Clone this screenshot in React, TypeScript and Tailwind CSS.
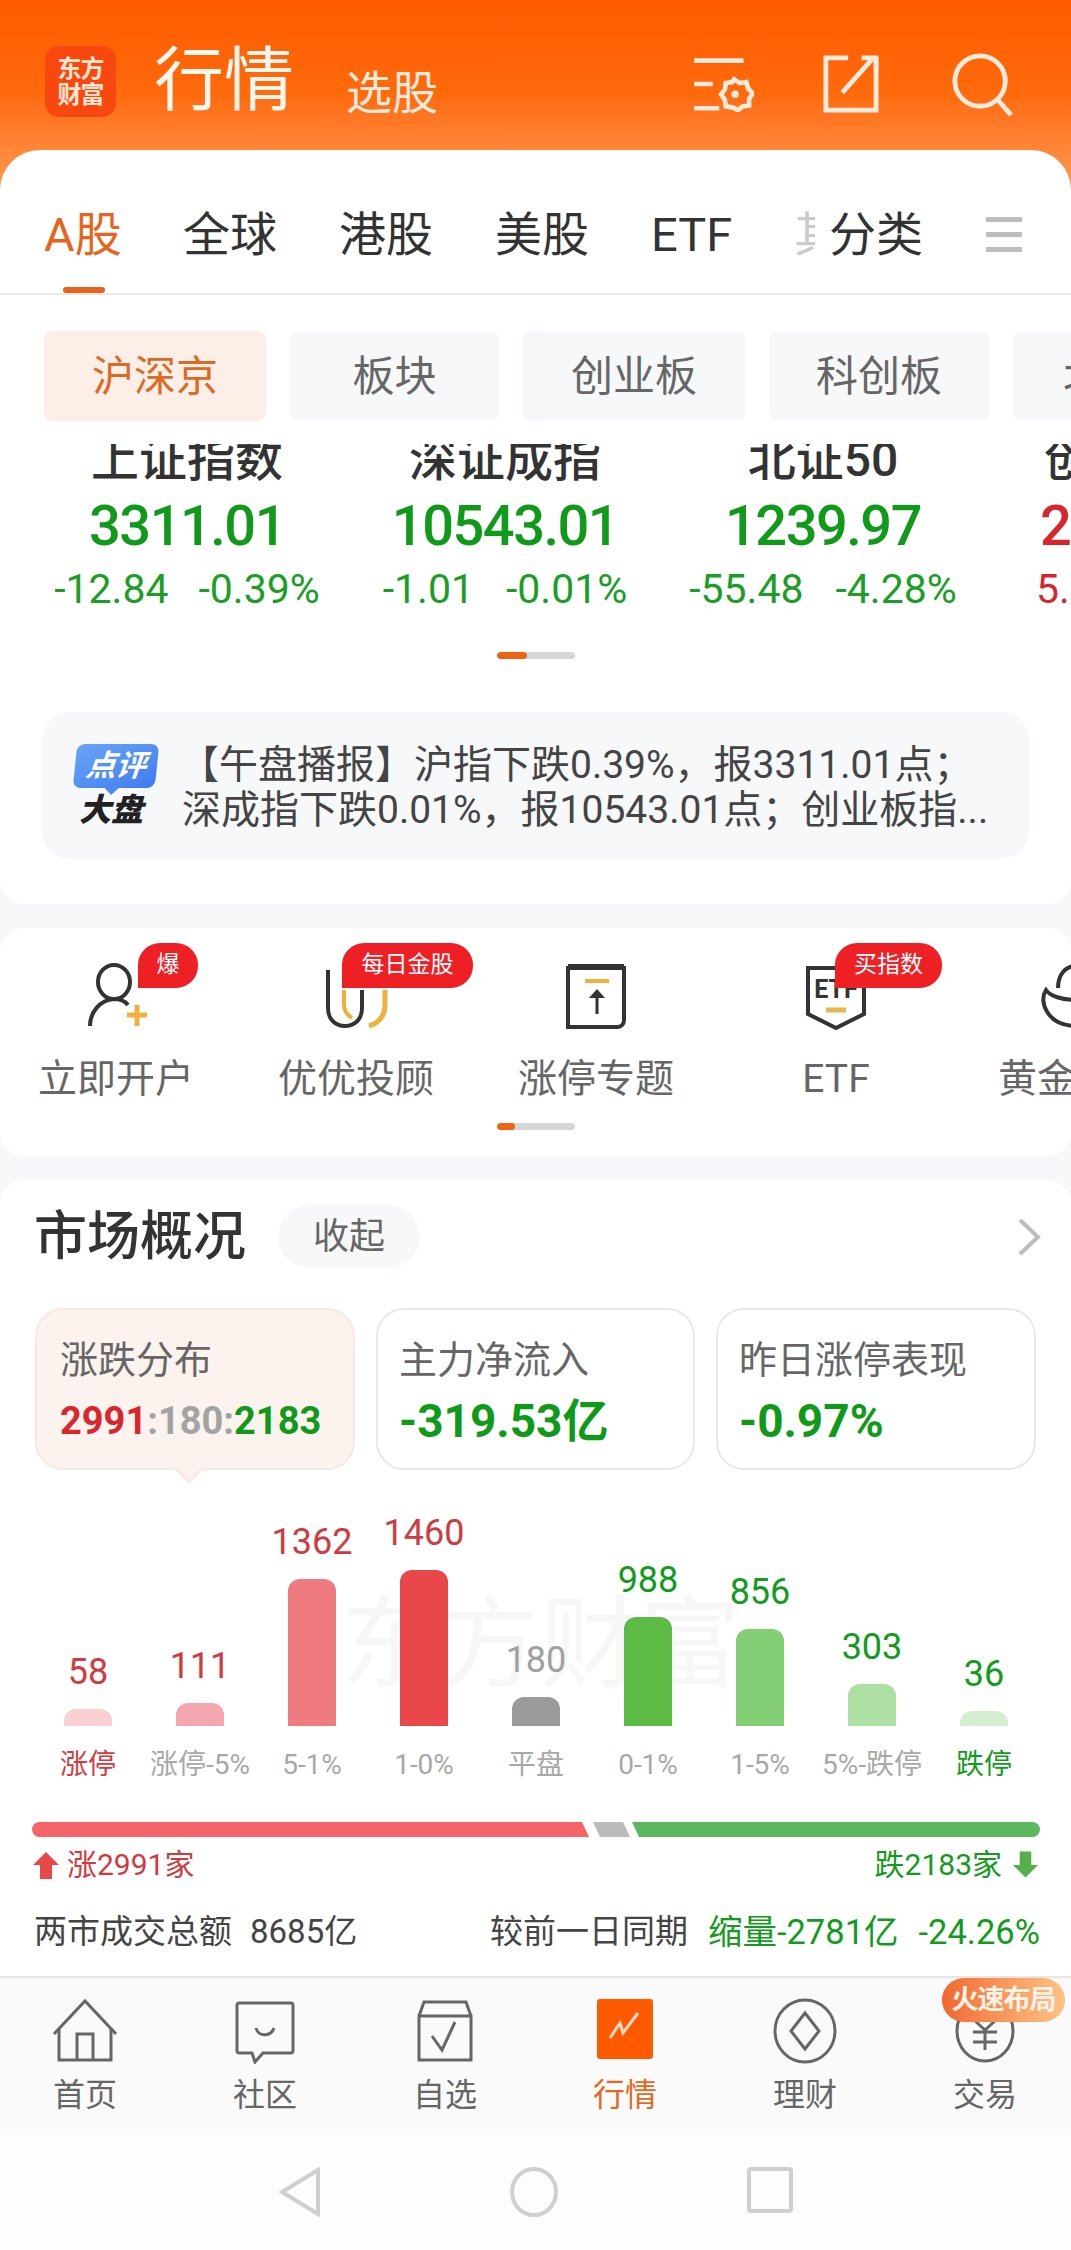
import React from "react";

const bars = [
  { n: "58", h: 17, bar: "bg-[#fbd0d4]", num: "text-[#d13a3f]", label: "涨停", lab: "text-[#d13a3f]" },
  { n: "111", h: 23, bar: "bg-[#f4a7ae]", num: "text-[#d13a3f]", label: "涨停-5%", lab: "text-[#a8a8a8]" },
  { n: "1362", h: 147, bar: "bg-[#ef7b80]", num: "text-[#d13a3f]", label: "5-1%", lab: "text-[#a8a8a8]" },
  { n: "1460", h: 156, bar: "bg-[#e94749]", num: "text-[#d13a3f]", label: "1-0%", lab: "text-[#a8a8a8]" },
  { n: "180", h: 29, bar: "bg-[#9b9b9b]", num: "text-[#a0a0a0]", label: "平盘", lab: "text-[#a8a8a8]" },
  { n: "988", h: 109, bar: "bg-[#5dbb46]", num: "text-[#119c1c]", label: "0-1%", lab: "text-[#a8a8a8]" },
  { n: "856", h: 97, bar: "bg-[#82cf75]", num: "text-[#119c1c]", label: "1-5%", lab: "text-[#a8a8a8]" },
  { n: "303", h: 42, bar: "bg-[#afe0a3]", num: "text-[#119c1c]", label: "5%-跌停", lab: "text-[#a8a8a8]" },
  { n: "36", h: 15, bar: "bg-[#d5eecf]", num: "text-[#119c1c]", label: "跌停", lab: "text-[#119c1c]" },
];

const indices = [
  { name: "上证指数", value: "3311.01", a: "-12.84", b: "-0.39%", gap: "gap-[30px]" },
  { name: "深证成指", value: "10543.01", a: "-1.01", b: "-0.01%", gap: "gap-[32px]" },
  { name: "北证50", value: "1239.97", a: "-55.48", b: "-4.28%", gap: "gap-[32px]" },
];

function HeaderIcons() {
  return (
    <div className="flex items-center text-[#ffeadc]">
      <svg width="62" height="56" viewBox="0 0 66 60" fill="none" stroke="currentColor" strokeWidth="5">
        <path d="M2 5h53M2 30h20M2 56h27" />
        <path d="M45 25l6 4 7-1 2 7 5 5-4 6 0 7-7 1-5 4-6-3-7-1-1-7-4-6 4-5 1-7 7-1z" />
        <circle cx="46" cy="41" r="4" fill="currentColor" stroke="none" />
      </svg>
      <svg className="ml-[69px]" width="56" height="58" viewBox="0 0 58 60" fill="none" stroke="currentColor" strokeWidth="5">
        <path d="M26 3H3v54h52V3" />
        <path d="M20 39L52 3M40 3h15v13" />
      </svg>
      <svg className="ml-[73px]" width="62" height="64" viewBox="0 0 64 64" fill="none" stroke="currentColor" strokeWidth="5">
        <circle cx="29" cy="29" r="26" />
        <path d="M47 48l14 16" />
      </svg>
    </div>
  );
}

function Dots({ w }: { w: string }) {
  return (
    <div className="flex justify-center">
      <div className="w-[78px] h-[7px] rounded-full bg-[#d6d6d6] overflow-hidden">
        <div className={`h-full rounded-full bg-[#ee6413] ${w}`} />
      </div>
    </div>
  );
}

function ShortcutIcon({ kind }: { kind: string }) {
  if (kind === "user")
    return (
      <svg width="80" height="70" viewBox="0 0 80 70" fill="none" stroke="#333" strokeWidth="4">
        <ellipse cx="38" cy="22" rx="16" ry="17" />
        <path d="M14 66c0-14 10-26 24-27 6 0 11 2 14 6" />
        <path d="M61 45v21M51 55h20" stroke="#f0b13c" strokeWidth="5" />
      </svg>
    );
  if (kind === "u")
    return (
      <svg width="80" height="70" viewBox="0 0 80 70" fill="none" stroke="#333" strokeWidth="4">
        <path d="M28 30v14c0 6 3 11 8 14" stroke="#f0b13c" />
        <path d="M69 30v14c0 12-6 19-16 22" stroke="#f0b13c" strokeWidth="5" />
        <path d="M12 10v38c0 12 8 18 17 18s17-6 17-18V30" />
      </svg>
    );
  if (kind === "doc")
    return (
      <svg width="80" height="70" viewBox="0 0 80 70" fill="none" stroke="#333" strokeWidth="4">
        <path d="M12 8h56v52c0 4-3 7-7 7H12z" />
        <path d="M12 7h56" strokeWidth="6" />
        <path d="M29 21h24" stroke="#f0b13c" strokeWidth="4" />
        <path d="M41 54V32" strokeWidth="3" />
        <path d="M33 38l8-9 8 9z" fill="#333" stroke="none" />
      </svg>
    );
  if (kind === "etf")
    return (
      <svg width="80" height="70" viewBox="0 0 80 70" fill="none" stroke="#333" strokeWidth="4">
        <path d="M12 8h56v46L40 68 12 54z" />
        <text x="40" y="38" textAnchor="middle" fontSize="25" fontWeight="700" fill="#333" stroke="none" fontFamily="Roboto">
          ETF
        </text>
        <path d="M30 50h20" stroke="#e8b84f" strokeWidth="5" />
      </svg>
    );
  return (
    <svg width="80" height="70" viewBox="0 0 80 70" fill="none" stroke="#333" strokeWidth="4">
      <path d="M10 30c-8 12 2 36 30 36s38-24 30-36c-4 6-16 10-30 10S14 36 10 30z" />
      <path d="M22 28c0-14 8-22 18-22s18 8 18 22" />
    </svg>
  );
}

function NavIcon({ kind }: { kind: string }) {
  const gray = "#666";
  if (kind === "home")
    return (
      <svg width="70" height="66" viewBox="0 0 70 66" fill="none" stroke={gray} strokeWidth="3">
        <path d="M4 36L35 3l31 33" />
        <path d="M9 30v32h52V30" />
        <path d="M27 62V36h16v26" />
      </svg>
    );
  if (kind === "chat")
    return (
      <svg width="70" height="66" viewBox="0 0 70 66" fill="none" stroke={gray} strokeWidth="3">
        <path d="M9 5h52c1 0 2 1 2 2v46c0 1-1 2-2 2H33l-8 9-3-9H9c-1 0-2-1-2-2V7c0-1 1-2 2-2z" />
        <path d="M26 30c2 9 15 9 18 0" />
      </svg>
    );
  if (kind === "check")
    return (
      <svg width="70" height="66" viewBox="0 0 70 66" fill="none" stroke={gray} strokeWidth="3">
        <path d="M9 18h52v44H9zM9 18l5-14h42l5 14" />
        <path d="M22 38l10 14 13-28" />
      </svg>
    );
  if (kind === "chart")
    return (
      <svg width="70" height="66" viewBox="0 0 70 66" fill="none">
        <rect x="7" y="1" width="56" height="60" rx="3" fill="#ff5a00" />
        <path d="M20 40l10-15 3 10 15-20" stroke="#ffd9c2" strokeWidth="3" />
      </svg>
    );
  if (kind === "coin")
    return (
      <svg width="70" height="66" viewBox="0 0 70 66" fill="none" stroke={gray} strokeWidth="3">
        <ellipse cx="35" cy="33" rx="30" ry="31" />
        <path d="M35 15L49 33 35 51 21 33z" />
      </svg>
    );
  return (
    <svg width="70" height="66" viewBox="0 0 70 66" fill="none" stroke={gray} strokeWidth="3">
      <ellipse cx="35" cy="33" rx="28" ry="30" />
      <path d="M24 22l11 10 11-10M23 34h24M23 44h24M35 32v20" />
    </svg>
  );
}

export default function App() {
  return (
    <div className="w-[1071px] h-[2250px] overflow-hidden flex flex-col bg-[#f7f8fa] text-[#333] [font-family:Roboto,'Noto_Sans_CJK_SC',sans-serif]">
      {/* top bar */}
      <div className="h-[190px] shrink-0 bg-gradient-to-b from-[#ff5a00] via-[#ff6a0c] to-[#ff9a4c] pt-[46px] pl-[45px] pr-[57px]">
        <div className="flex items-start justify-between">
          <div className="flex items-start">
            <div className="w-[71px] h-[71px] rounded-[14px] bg-[#f9480f] flex flex-col items-center justify-center text-[24px] leading-[26px] font-bold text-[#ffe6d0] tracking-[-1px]">
              <span>东方</span>
              <span>财富</span>
            </div>
            <div className="ml-[38px] text-[70px] leading-[70px] text-[#fff6ee]">行情</div>
            <div className="ml-[52px] mt-[22px] text-[46px] leading-[50px] text-[#ffeadc]">选股</div>
          </div>
          <div className="mt-[6px]">
            <HeaderIcons />
          </div>
        </div>
      </div>

      {/* quote card */}
      <div className="relative -mt-[40px] h-[754px] shrink-0 bg-white rounded-t-[40px] rounded-b-[24px] flex flex-col overflow-hidden">
        <div className="relative h-[145px] shrink-0 border-b-2 border-[#e9e9e9] flex items-center pt-[26px] pl-[44px] text-[47px] leading-[56px]">
          <span className="w-[139px] text-[#e8641c]">A股</span>
          <span className="w-[156px]">全球</span>
          <span className="w-[156px]">港股</span>
          <span className="w-[156px]">美股</span>
          <span className="w-[143px]">ETF</span>
          <span className="w-[35px]">
            <span className="block w-[21px] overflow-hidden whitespace-nowrap opacity-25">其他</span>
          </span>
          <span className="w-[157px]">分类</span>
          <div className="flex flex-col gap-[10px]">
            <div className="w-[36px] h-[5px] bg-[#bdbdbd]" />
            <div className="w-[36px] h-[5px] bg-[#bdbdbd]" />
            <div className="w-[36px] h-[5px] bg-[#bdbdbd]" />
          </div>
          <div className="absolute left-[63px] bottom-0 w-[42px] h-[6px] rounded-full bg-[#e8641c]" />
        </div>

        <div className="flex mt-[36px] pl-[44px] gap-[24px] h-[90px] shrink-0 text-[42px] text-[#666]">
          <div className="w-[222px] shrink-0 rounded-[8px] bg-[#fdefe8] flex items-center justify-center text-[#db6a22]">沪深京</div>
          <div className="w-[209px] shrink-0 rounded-[8px] bg-[#f7f8fa] flex items-center justify-center">板块</div>
          <div className="w-[222px] shrink-0 rounded-[8px] bg-[#f7f8fa] flex items-center justify-center">创业板</div>
          <div className="w-[220px] shrink-0 rounded-[8px] bg-[#f7f8fa] flex items-center justify-center">科创板</div>
          <div className="w-[120px] shrink-0 rounded-[8px] bg-[#f7f8fa] pl-[50px] flex items-center whitespace-nowrap">北证</div>
        </div>

        <div className="mt-[23px] h-[172px] shrink-0 overflow-hidden flex pl-[28px]">
          {indices.map((it) => (
            <div key={it.name} className="w-[318px] shrink-0 flex flex-col items-center">
              <div className="-mt-[9px] text-[48px] leading-[50px] font-medium text-[#333]">{it.name}</div>
              <div className="mt-[10px] text-[56px] leading-[62px] font-medium tracking-[-1.5px] text-[#109a1a]">{it.value}</div>
              <div className={`mt-[9px] flex text-[41px] leading-[46px] text-[#1b9e26] ${it.gap}`}>
                <span>{it.a}</span>
                <span>{it.b}</span>
              </div>
            </div>
          ))}
          <div className="w-[318px] shrink-0 flex flex-col pl-[58px]">
            <div className="-mt-[9px] ml-[4px] text-[48px] leading-[50px] font-medium whitespace-nowrap">创业板指</div>
            <div className="mt-[10px] text-[56px] leading-[62px] font-medium text-[#d9262e]">2098.21</div>
            <div className="mt-[9px] -ml-[4px] text-[41px] leading-[46px] text-[#d9262e]">5.10</div>
          </div>
        </div>

        <div className="mt-[36px]">
          <Dots w="w-[30px]" />
        </div>

        <div className="mt-[53px] mx-[42px] h-[147px] shrink-0 rounded-[28px] bg-[#f7f8fa] flex items-center pl-[30px]">
          <div className="w-[88px] shrink-0 flex flex-col items-center">
            <div className="relative w-[82px] h-[44px] rounded-[8px] bg-gradient-to-br from-[#6aa4f5] to-[#3f7cf0] flex items-center justify-center text-[30px] leading-none font-bold italic text-white -skew-x-6">
              点评
              <div className="absolute -bottom-[5px] left-[34px] w-[10px] h-[10px] rotate-45 bg-[#4f88f1]" />
            </div>
            <div className="mt-[5px] -ml-[10px] text-[32px] leading-[34px] font-black italic text-[#222]">大盘</div>
          </div>
          <div className="ml-[8px] pt-[4px] text-[39px] leading-[45px] text-[#444] whitespace-nowrap">
            <div className="ml-[12px]">【午盘播报】沪指下跌0.39%，报3311.01点；</div>
            <div className="ml-[14px]">深成指下跌0.01%，报10543.01点；创业板指...</div>
          </div>
        </div>
      </div>

      {/* shortcut card */}
      <div className="mt-[24px] h-[228px] shrink-0 bg-white rounded-[24px] overflow-hidden flex flex-col">
        <div className="flex -ml-[4px] pt-[32px]">
          {[
            { kind: "user", label: "立即开户", badge: "爆", cls: "left-[142px] w-[60px]" },
            { kind: "u", label: "优优投顾", badge: "每日金股", cls: "left-[106px] w-[131px]" },
            { kind: "doc", label: "涨停专题", badge: "", cls: "" },
            { kind: "etf", label: "ETF", badge: "买指数", cls: "left-[119px] w-[107px]" },
            { kind: "gold", label: "黄金专区", badge: "", cls: "" },
          ].map((s) => (
            <div key={s.label} className="relative w-[240px] shrink-0 flex flex-col items-center">
              <ShortcutIcon kind={s.kind} />
              <div className="mt-[24px] h-[50px] text-[39px] leading-[50px] text-[#666] whitespace-nowrap">{s.label}</div>
              {s.badge && (
                <div className={`absolute -top-[17px] h-[45px] bg-[#ee1f25] rounded-t-[22px] rounded-br-[22px] flex items-center justify-center text-[23px] text-white ${s.cls}`}>
                  {s.badge}
                </div>
              )}
            </div>
          ))}
        </div>
        <div className="mt-[19px]">
          <Dots w="w-[18px]" />
        </div>
      </div>

      {/* market overview */}
      <div className="mt-[24px] h-[798px] shrink-0 bg-white rounded-t-[24px] border-b-2 border-[#e6e6e6] flex flex-col">
        <div className="mt-[25px] h-[63px] shrink-0 flex items-center pl-[34px] pr-[30px]">
          <div className="text-[53px] leading-[60px] font-medium">市场概况</div>
          <div className="ml-[32px] w-[142px] h-[63px] rounded-full bg-[#f7f8fa] flex items-center justify-center text-[36px] text-[#666]">收起</div>
          <svg className="ml-auto" width="24" height="38" viewBox="0 0 24 38" fill="none" stroke="#bdbdbd" strokeWidth="4">
            <path d="M3 2l18 17L3 36" />
          </svg>
        </div>

        <div className="mt-[40px] flex pl-[35px] gap-[21px] h-[162px] shrink-0">
          <div className="relative w-[320px] rounded-[28px] border-2 border-[#f8e8e0] bg-[#fdf3ee] pl-[23px] pt-[26px]">
            <div className="text-[38px] leading-[48px] text-[#666]">涨跌分布</div>
            <div className="mt-[15px] text-[38px] leading-[44px] font-bold">
              <span className="text-[#d9262e]">2991</span>
              <span className="text-[#a3a3a3]">:180:</span>
              <span className="text-[#109a1a]">2183</span>
            </div>
            <div className="absolute -bottom-[11px] left-[142px] w-[20px] h-[20px] rotate-45 bg-[#fdf3ee] border-b-2 border-r-2 border-[#f8e8e0]" />
          </div>
          <div className="w-[319px] rounded-[28px] border-2 border-[#e8e8e8] pl-[21px] pt-[26px]">
            <div className="text-[38px] leading-[48px] text-[#666]">主力净流入</div>
            <div className="mt-[13px] text-[46px] leading-[48px] font-bold text-[#109a1a]">-319.53亿</div>
          </div>
          <div className="w-[320px] rounded-[28px] border-2 border-[#e8e8e8] pl-[21px] pt-[26px]">
            <div className="text-[38px] leading-[48px] text-[#666]">昨日涨停表现</div>
            <div className="mt-[13px] text-[46px] leading-[48px] font-bold text-[#109a1a]">-0.97%</div>
          </div>
        </div>

        <div className="relative flex items-end h-[256px] shrink-0 pl-[32px]">
          <div className="absolute left-[340px] top-[120px] text-[100px] leading-[110px] text-[#f7f7f7] whitespace-nowrap">东方财富</div>
          {bars.map((b) => (
            <div key={b.label} className="relative w-[112px] shrink-0 flex flex-col items-center">
              <div className={`mb-[19px] text-[36px] leading-[36px] ${b.num}`}>{b.n}</div>
              <div className={`w-[48px] rounded-t-[12px] ${b.bar}`} style={{ height: b.h }} />
            </div>
          ))}
        </div>
        <div className="flex mt-[25px] pl-[32px] h-[28px] shrink-0">
          {bars.map((b) => (
            <div key={b.label} className={`w-[112px] shrink-0 text-center text-[28px] leading-[28px] whitespace-nowrap ${b.lab}`}>
              {b.label}
            </div>
          ))}
        </div>

        <div className="mt-[43px] ml-[32px] flex h-[15px] shrink-0">
          <div className="w-[557px] h-full rounded-l-full bg-[#f56468] [clip-path:polygon(0_0,550px_0,100%_100%,0_100%)]" />
          <div className="ml-[4px] w-[37px] h-full bg-[#bbbbbb] [clip-path:polygon(0_0,30px_0,100%_100%,7px_100%)]" />
          <div className="ml-[2px] w-[408px] h-full rounded-r-full bg-[#5cb85f] [clip-path:polygon(0_0,100%_0,100%_100%,7px_100%)]" />
        </div>

        <div className="mt-[12px] h-[32px] shrink-0 flex items-center justify-between px-[32px] text-[30px] leading-[32px]">
          <div className="flex items-center text-[#d13a3f]">
            <svg width="28" height="28" viewBox="0 0 28 28" fill="#e8484a">
              <path d="M14 1L27 14H20V28H8V14H1z" />
            </svg>
            <span className="ml-[7px]">涨2991家</span>
          </div>
          <div className="flex items-center text-[#119c1c]">
            <span className="mr-[10px]">跌2183家</span>
            <svg width="27" height="28" viewBox="0 0 28 28" fill="#55b04b">
              <path d="M14 27L27 14H20V0H8V14H1z" />
            </svg>
          </div>
        </div>

        <div className="mt-[33px] h-[36px] shrink-0 flex items-center justify-between pl-[34px] pr-[31px] text-[33px] leading-[36px]">
          <div className="flex gap-[18px] text-[#444]">
            <span>两市成交总额</span>
            <span>8685亿</span>
          </div>
          <div className="flex items-center">
            <span className="text-[#444]">较前一日同期</span>
            <span className="ml-[20px] text-[34.5px] text-[#119c1c]">缩量-2781亿</span>
            <span className="ml-[20px] text-[34.5px] text-[#119c1c]">-24.26%</span>
          </div>
        </div>
      </div>

      {/* bottom nav */}
      <div className="relative h-[157px] shrink-0 bg-[#fafafa] flex pt-[20px]">
        {[
          { kind: "home", label: "首页", cls: "ml-[-5px] text-[#666]" },
          { kind: "chat", label: "社区", cls: "text-[#666]" },
          { kind: "check", label: "自选", cls: "text-[#666]" },
          { kind: "chart", label: "行情", cls: "text-[#e2691f]" },
          { kind: "coin", label: "理财", cls: "text-[#666]" },
          { kind: "trade", label: "交易", cls: "text-[#666]" },
        ].map((n) => (
          <div key={n.label} className={`w-[180px] shrink-0 flex flex-col items-center ${n.cls}`}>
            <NavIcon kind={n.kind} />
            <div className="mt-[11px] text-[32px] leading-[40px]">{n.label}</div>
          </div>
        ))}
        <div className="absolute left-[942px] top-0 w-[123px] h-[44px] rounded-full bg-gradient-to-r from-[#f0682f] to-[#fdc285] flex items-center justify-center text-[27px] font-bold tracking-[-1px] text-[#fff3e8] whitespace-nowrap">
          火速布局
        </div>
      </div>

      {/* system bar */}
      <div className="flex-1 bg-[#fdfdfd] flex items-start justify-center pt-[32px] gap-[188px]">
        <svg width="42" height="50" viewBox="0 0 42 50" fill="none" stroke="#cfcfcf" strokeWidth="4">
          <path d="M39 3v44L3 25z" />
        </svg>
        <svg width="50" height="50" viewBox="0 0 50 50" fill="none" stroke="#cfcfcf" strokeWidth="4">
          <ellipse cx="25" cy="25" rx="22" ry="23" />
        </svg>
        <svg width="46" height="46" viewBox="0 0 46 46" fill="none" stroke="#cfcfcf" strokeWidth="4">
          <rect x="2" y="2" width="42" height="42" rx="2" />
        </svg>
      </div>
    </div>
  );
}
